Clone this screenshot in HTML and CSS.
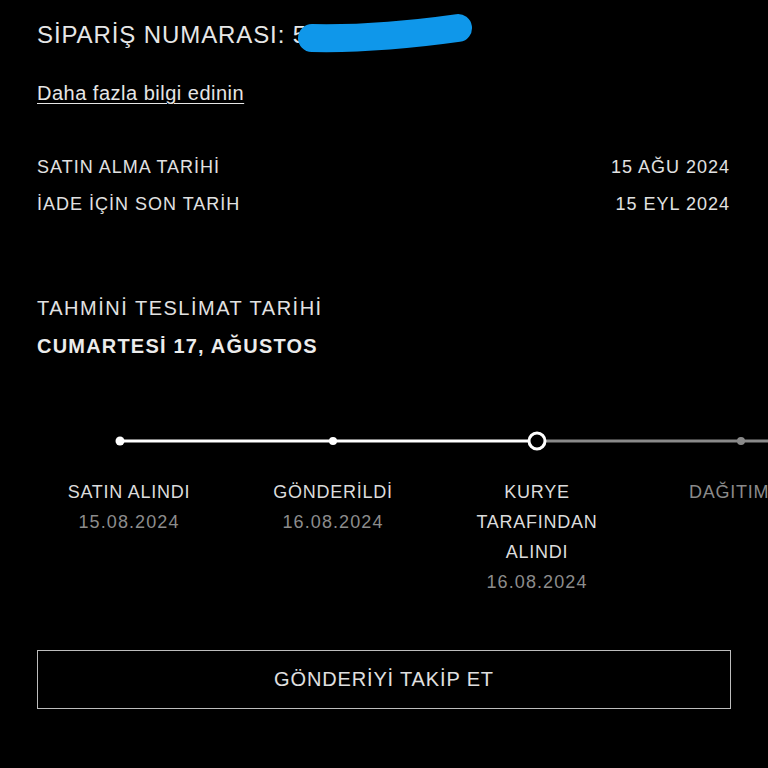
FILE: index.html
```html
<!DOCTYPE html>
<html lang="tr">
<head>
<meta charset="utf-8">
<link rel="stylesheet" href="styles.css">
</head>
<body>
<main class="page">
  <h1 class="order">SİPARİŞ NUMARASI: 5
    <svg class="scribble" width="200" height="50" viewBox="0 0 200 50"><path d="M14 30 C60 31 110 27 160 20" stroke="#0f97ea" stroke-width="28" stroke-linecap="round" fill="none"/></svg>
  </h1>
  <a class="more" href="#">Daha fazla bilgi edinin</a>
  <div class="rows">
    <div class="row"><span>SATIN ALMA TARİHİ</span><span>15 AĞU 2024</span></div>
    <div class="row"><span>İADE İÇİN SON TARİH</span><span>15 EYL 2024</span></div>
  </div>
  <div class="eta">
    <div class="eta-label">TAHMİNİ TESLİMAT TARİHİ</div>
    <div class="eta-date">CUMARTESİ 17, AĞUSTOS</div>
  </div>
</main>
<section class="track">
  <svg class="track-line" width="768" height="30" viewBox="0 0 768 30">
    <line x1="120" y1="15" x2="537" y2="15" stroke="#ffffff" stroke-width="3"/>
    <line x1="537" y1="15" x2="768" y2="15" stroke="#8a8a8a" stroke-width="3"/>
    <circle cx="120" cy="15" r="4.5" fill="#ffffff"/>
    <circle cx="333" cy="15" r="4" fill="#ffffff"/>
    <circle cx="741" cy="15" r="4" fill="#8a8a8a"/>
    <circle cx="537" cy="15" r="8" fill="#000" stroke="#ffffff" stroke-width="3"/>
  </svg>
  <div class="steps">
    <div class="step"><div class="step-name">SATIN ALINDI</div><div class="step-date">15.08.2024</div></div>
    <div class="step"><div class="step-name">GÖNDERİLDİ</div><div class="step-date">16.08.2024</div></div>
    <div class="step"><div class="step-name">KURYE<br>TARAFINDAN<br>ALINDI</div><div class="step-date">16.08.2024</div></div>
    <div class="step step-last"><div class="step-name dim">DAĞITIM</div></div>
  </div>
</section>
<div class="btn-wrap"><button class="track-btn">GÖNDERİYİ TAKİP ET</button></div>
</body>
</html>
```
FILE: styles.css
```css
html, body {
  margin: 0;
  padding: 0;
  background: #000;
  width: 768px;
  height: 768px;
  overflow: hidden;
  font-family: "Liberation Sans", Arial, sans-serif;
  color: #e4e4e4;
}
.page {
  padding: 18px 38px 0 37px;
}
.order {
  position: relative;
  margin: 0;
  font-size: 24px;
  font-weight: normal;
  line-height: 34px;
  letter-spacing: 0.9px;
  color: #e6e6e6;
  white-space: nowrap;
}
.scribble {
  position: absolute;
  left: 261px;
  top: -10px;
}
.more {
  display: inline-block;
  margin-top: 29px;
  font-size: 20px;
  line-height: 24px;
  letter-spacing: 0.5px;
  color: #e6e6e6;
  text-decoration: underline;
  text-underline-offset: 3px;
  text-decoration-thickness: 1px;
}
.rows {
  margin-top: 51px;
  display: flex;
  flex-direction: column;
  gap: 15px;
}
.row {
  display: flex;
  justify-content: space-between;
  font-size: 18px;
  line-height: 22px;
  letter-spacing: 1px;
  color: #e2e2e2;
}
.eta {
  margin-top: 80px;
  display: flex;
  flex-direction: column;
  gap: 12px;
}
.eta-label {
  font-size: 20px;
  line-height: 26px;
  letter-spacing: 1.5px;
  color: #e2e2e2;
}
.eta-date {
  font-size: 20px;
  line-height: 26px;
  font-weight: bold;
  color: #ececec;
  letter-spacing: 1.2px;
}
.track {
  margin-top: 67px;
}
.track-line {
  display: block;
}
.steps {
  display: flex;
  margin-top: 21px;
  padding-left: 27px;
}
.step {
  flex: 0 0 204px;
  text-align: center;
  font-size: 18px;
  line-height: 30px;
  letter-spacing: 0.75px;
}
.step-last {
  flex: 0 0 auto;
}
.step-name {
  color: #dcdcdc;
}
.step-name.dim {
  color: #8a8a8a;
  text-align: left;
  padding-left: 50px;
}
.step-date {
  color: #8c8c8c;
  letter-spacing: 1.1px;
}
.btn-wrap {
  padding: 0 37px 0 37px;
  margin-top: 53px;
}
.track-btn {
  display: block;
  width: 694px;
  height: 59px;
  background: #000;
  border: 1px solid #bdbdbd;
  color: #e0e0e0;
  font-family: "Liberation Sans", Arial, sans-serif;
  font-size: 20px;
  letter-spacing: 0.85px;
  padding: 0;
}
```
